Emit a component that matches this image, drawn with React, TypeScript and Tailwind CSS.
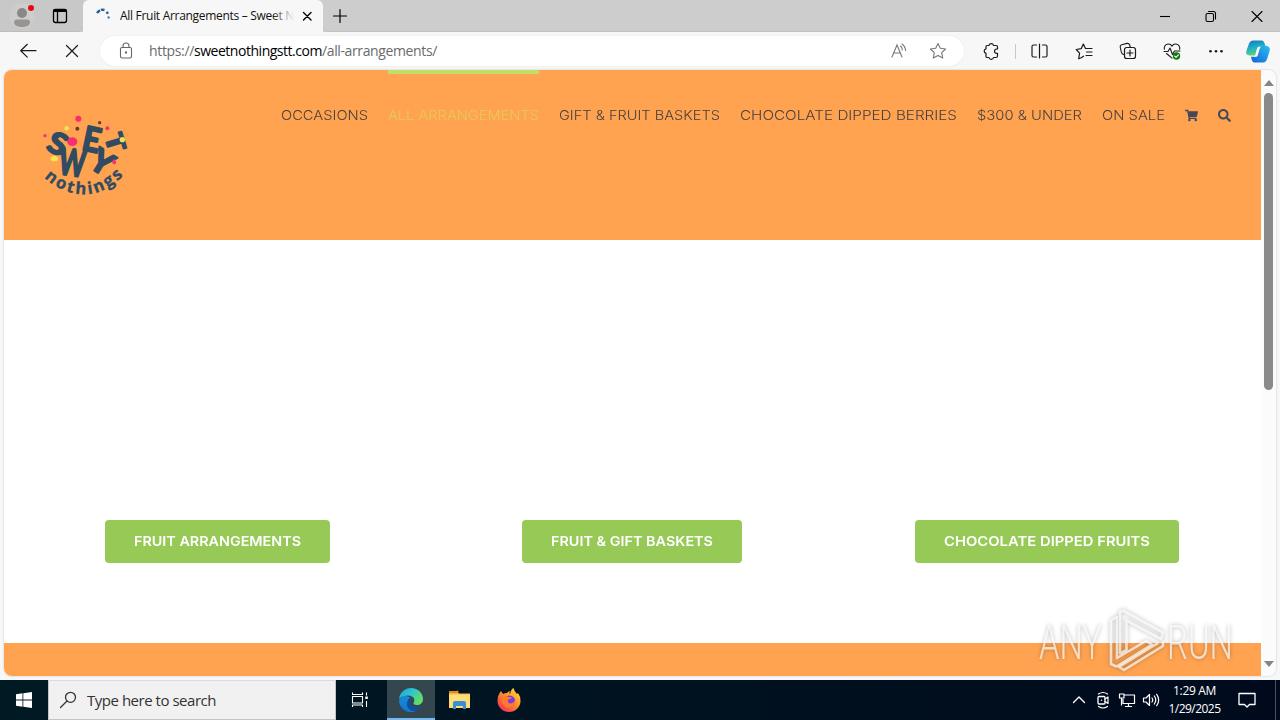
import React, { useLayoutEffect, useRef } from "react";
import { FaSearch, FaShoppingCart } from "react-icons/fa";

// makes the text fill the width of its box, by tracking or by wider letters
const FitText: React.FC<{
  className: string;
  children: string;
  wide?: boolean;
}> = ({ className, children, wide }) => {
  const box = useRef<HTMLSpanElement>(null);
  const text = useRef<HTMLSpanElement>(null);
  useLayoutEffect(() => {
    if (!box.current || !text.current) return;
    text.current.style.letterSpacing = "0px";
    text.current.style.transform = "none";
    const boxWidth = box.current.getBoundingClientRect().width;
    const textWidth = text.current.getBoundingClientRect().width;
    if (wide) {
      text.current.style.transform = `scaleX(${boxWidth / textWidth})`;
    } else {
      text.current.style.letterSpacing = `${(boxWidth - textWidth) / children.length}px`;
    }
  }, [children, wide]);
  return (
    <span ref={box} className={`block shrink-0 whitespace-nowrap ${className}`}>
      <span ref={text} className="inline-block origin-left">
        {children}
      </span>
    </span>
  );
};

const Icon: React.FC<{ className?: string; children: React.ReactNode }> = ({
  className = "size-5",
  children,
}) => (
  <svg
    viewBox="0 0 20 20"
    className={`shrink-0 ${className}`}
    fill="none"
    stroke="currentColor"
    strokeWidth="1.1"
    strokeLinecap="round"
    strokeLinejoin="round"
  >
    {children}
  </svg>
);

const TabStrip = () => (
  <div className="flex h-8 bg-[#cdcdcd]">
    <div className="flex w-[83px] items-center rounded-br-md bg-[#c8c8c8] shadow-[inset_0_-1px_0_#bdbdbd]">
      <svg viewBox="0 0 28 28" className="ml-2 size-7">
        <circle cx="14" cy="14" r="12.5" fill="#cfcdcb" />
        <circle cx="14" cy="11" r="5" fill="#8a8886" />
        <path d="M6 20.500q0-3 3-3h10q3 0 3 3c0 3-4 4.500-8 4.500S6 23.500 6 20.500z" fill="#979593" />
        <circle cx="23" cy="6" r="3" fill="#e50914" />
      </svg>
      <Icon className="ml-[14px] size-5">
        <rect x="3.500" y="3.500" width="13" height="13" rx="2" strokeWidth="1.300" />
        <path d="M4 5.200h12M4 4.500h12" strokeWidth="1.800" />
        <path d="M7.500 6v10" strokeWidth="1.300" />
      </Icon>
    </div>
    <div className="flex w-60 items-center rounded-t-md bg-[#f7f7f7]">
      <svg viewBox="0 0 20 20" className="ml-[10px] size-5" fill="none">
        <path d="M4 7Q7 2.800 11.500 4" stroke="#2b6299" strokeWidth="2.400" strokeDasharray="4 1" />
        <circle cx="14.300" cy="6.800" r="1.400" fill="#2b6299" />
        <circle cx="15.600" cy="11.500" r="1.200" fill="#4f7fae" />
      </svg>
      <div className="relative ml-[7px] w-[174px] overflow-hidden text-[12px] text-[#111]">
        <FitText className="w-[174px]">All Fruit Arrangements – Sweet N</FitText>
        <div className="absolute inset-y-0 right-0 w-5 bg-linear-to-r from-[#f7f7f7]/10 to-[#f7f7f7]" />
      </div>
      <Icon className="ml-[3px] size-5">
        <path d="M6.500 6.500l7.500 7.500M14 6.500L6.500 14" strokeWidth="1.400" />
      </Icon>
    </div>
    <div className="flex flex-1 items-center rounded-bl-md shadow-[inset_0_-1px_0_#c2c2c2]">
      <Icon className="ml-[7px] size-5">
        <path d="M10 3.500v13M3.500 10h13" strokeWidth="1.200" />
      </Icon>
    </div>
    <div className="flex shadow-[inset_0_-1px_0_#c2c2c2]">
      <div className="flex w-[46px] items-center justify-center">
        <Icon>
          <path d="M5 10.500h10" strokeLinecap="butt" />
        </Icon>
      </div>
      <div className="flex w-[46px] items-center justify-center">
        <Icon>
          <rect x="5" y="7.500" width="7.500" height="8" rx="1.500" />
          <path d="M7.500 5.500h5q2 0 2 2v5.500" />
        </Icon>
      </div>
      <div className="flex w-[46px] items-center justify-center">
        <Icon>
          <path d="M5 5.500l10 10M15 5.500l-10 10" />
        </Icon>
      </div>
    </div>
  </div>
);

const Toolbar = () => (
  <div className="flex h-[38px] items-center bg-[#f7f7f7] text-[#1b1b1b]">
    <Icon className="ml-[18px] size-5">
      <path d="M18 9.700H3M9.300 3.300L2.700 9.700l6.600 6.400" strokeWidth="1.200" />
    </Icon>
    <Icon className="ml-6 size-5">
      <path d="M4.500 4.500l11 11M15.500 4.500l-11 11" strokeWidth="1.200" />
    </Icon>
    <div className="ml-[18px] flex h-[30px] w-[864px] items-center rounded-full bg-white shadow-[0_0_2px_#e4e4e4]">
      <Icon className="ml-4 size-5 text-[#666]">
        <rect x="4.500" y="6.500" width="11" height="10.500" rx="1.500" />
        <path d="M7 6.500V5a3 3 0 016 0v1.500" />
        <circle cx="10" cy="11.500" r=".6" fill="currentColor" />
      </Icon>
      <div className="ml-[13px] flex flex-1 text-[14px] leading-5 text-[#6b6b6b]">
        <FitText className="w-[45px]">https://</FitText>
        <FitText className="w-[128px] text-black">sweetnothingstt.com</FitText>
        <FitText className="w-[115px]">/all-arrangements/</FitText>
      </div>
      <svg viewBox="0 0 20 20" className="size-5 text-[#777]" fill="none" stroke="currentColor" strokeWidth="1.100" strokeLinecap="round">
        <path d="M4 16L9 4l5 12M5.700 12h6.600" />
        <path d="M12.500 5q1.800 1.500 1.800 4M14 3q3.500 2.500 3.500 6.500" />
      </svg>
      <Icon className="ml-5 mr-4 size-5 text-[#777]">
        <path d="M10 2.500l2.300 4.800 5.300.7-3.900 3.700 1 5.300-4.700-2.600L5.300 17l1-5.300L2.400 8l5.300-.7z" />
      </Icon>
    </div>
    <div className="ml-[5px] flex w-11 justify-center">
      <Icon>
        <path d="M6 4.500h2a2.300 2.300 0 014.500 0h2.500q1.500 0 1.500 1.500v2h-.8a2.100 2.100 0 000 4.300h.8V15q0 1.500-1.500 1.500h-2.500a2.300 2.300 0 01-4.500 0H6q-1 0-1-1V12.300a2.300 2.300 0 010-4.500V5.500q0-1 1-1z" strokeWidth="1.200" />
      </Icon>
    </div>
    <div className="flex w-1 justify-center">
      <div className="h-[15px] w-px bg-[#c8c8c8]" />
    </div>
    <div className="flex w-11 justify-center">
      <Icon>
        <path d="M7.500 4H4.500q-1.500 0-1.500 1.500v9Q3 16 4.500 16h3M13.500 4h3Q18 4 18 5.500v9q0 1.500-1.500 1.500h-3M10.500 3v14" strokeWidth="1.200" />
      </Icon>
    </div>
    <div className="flex w-[45px] justify-center">
      <Icon>
        <path d="M7.200 16.700l-2.500 1 .9-5.500L2.200 8.500l5-.8L9.300 3l2.200 4.500h6.500M12.500 11h5.500M12 14.500h6M7.200 16.700l2.300-1.500" strokeWidth="1.200" />
      </Icon>
    </div>
    <div className="flex w-11 justify-center">
      <Icon>
        <path d="M5.500 13.500Q3.700 13 3.300 11L2.200 6q-.3-1.800 1.500-2.300L9 2.400q2-.3 2.700 1.600L12.200 6" />
        <rect x="6.500" y="6.500" width="11" height="11" rx="2.300" strokeWidth="1.200" />
        <path d="M12 9v6M9 12h6" strokeWidth="1.200" />
      </Icon>
    </div>
    <div className="flex w-11 justify-center">
      <Icon>
        <path d="M2.300 8.300C1.800 2.500 8 1.700 10 5.200c2-3.500 8.200-2.700 7.700 3.100M2 10.500h4L8 7l2.500 6.500 2-3.500h5.500M4.500 12.500L10 17.200" />
        <circle cx="14.500" cy="15" r="3.700" fill="#107c10" stroke="none" />
        <path d="M12.700 15.200l1.300 1.200 2.400-2.500" stroke="#fff" />
      </Icon>
    </div>
    <div className="flex w-11 justify-center">
      <svg viewBox="0 0 20 20" className="size-5" fill="currentColor">
        <circle cx="4.500" cy="10.300" r="1.300" />
        <circle cx="10" cy="10.300" r="1.300" />
        <circle cx="15.500" cy="10.300" r="1.300" />
      </svg>
    </div>
    <div className="flex w-10 justify-center">
      <svg viewBox="0 0 72 68" className="h-[23px] w-6">
        <defs>
          <linearGradient id="cpA" x1="0" y1="0" x2=".3" y2="1">
            <stop offset="0" stopColor="#1572c9" />
            <stop offset=".55" stopColor="#1fb1c4" />
            <stop offset="1" stopColor="#5fd276" />
          </linearGradient>
          <linearGradient id="cpB" x1="1" y1="0" x2="0" y2="1">
            <stop offset="0" stopColor="#2bc0ee" />
            <stop offset="1" stopColor="#1460dc" />
          </linearGradient>
        </defs>
        <path d="M22 1h26q6 1 8 9l2 8H46q-5 0-7 6l-6 17q-2 5-7 5H10Q-2 45 1 33L9 10Q13 1 22 1z" fill="url(#cpA)" />
        <path d="M50 67H25q-6-1-8-9l-2-8h10q6 0 8-6l7-21q2-6 8-6h12q14 2 11 15L63 57q-4 10-13 10z" fill="url(#cpB)" />
        <path d="M37 20h9q-4 2-5 6l-6 20q-1 4-5 4h-7q4-2 5-6l5-18q1-5 4-6z" fill="#fff" />
      </svg>
    </div>
  </div>
);

const SweetLogo = () => (
  <svg viewBox="0 0 330 300" className="h-[100px] w-[110px] shrink-0">
    <defs>
      <path id="arc" d="M42 218Q95 266 160 268T290 202" />
    </defs>
    <g
      fill="#304b62"
      stroke="#304b62"
      strokeWidth="6"
      strokeLinejoin="round"
      fontFamily="Lato, sans-serif"
      fontWeight="700"
      textAnchor="middle"
    >
      <text transform="translate(71 145) rotate(24) scale(1.15 1)" fontSize="88">S</text>
      <text transform="translate(121 212) rotate(8) scale(.68 1)" fontSize="112">W</text>
      <text transform="translate(178 139) rotate(12) scale(.9 1)" fontSize="102">E</text>
      <text transform="translate(198 200) rotate(32)" fontSize="96">Y</text>
      <text transform="translate(231 119) rotate(73) scale(1.2 1)" fontSize="72">T</text>
    </g>
    <text
      fill="#304b62"
      stroke="#304b62"
      strokeWidth="1"
      fontFamily="'Open Sans', sans-serif"
      fontWeight="700"
      fontSize="50"
    >
      <textPath href="#arc" textLength="267">nothings</textPath>
    </text>
    <circle cx="145" cy="41" r="9" fill="#f72f72" />
    <ellipse cx="127" cy="110" rx="15" ry="13" fill="#f72f72" />
    <circle cx="45" cy="92" r="5" fill="#f72f72" />
    <circle cx="232" cy="70" r="6" fill="#f72f72" />
    <path d="M251 162q10 6 6 14-6 4-10-2 0-8 4-12z" fill="#f72f72" />
    <circle cx="110" cy="70" r="7" fill="#f2df58" />
    <ellipse cx="73" cy="161" rx="11" ry="8" fill="#f2e64c" />
    <circle cx="277" cy="104" r="8" fill="#f2df58" />
    <circle cx="142" cy="71" r="6" fill="#71372e" />
    <circle cx="209" cy="53" r="5" fill="#71372e" />
  </svg>
);

const SiteHeader = () => (
  <header className="flex h-[170px] items-start bg-[#ffa351] pl-[26px] font-[Inter,sans-serif] text-[13.500px] text-[#463f3f]">
    <div className="pt-[35px]">
      <SweetLogo />
    </div>
    <nav className="ml-[141px] flex gap-5 pt-9 font-light leading-[18px]">
      <FitText wide className="w-[87px]">OCCASIONS</FitText>
      <div className="-mt-9 border-t-4 border-[#c3de66] pt-8 text-[#e5cb57]">
        <FitText wide className="w-[151px]">ALL ARRANGEMENTS</FitText>
      </div>
      <FitText wide className="w-[161px]">GIFT &amp; FRUIT BASKETS</FitText>
      <FitText wide className="w-[217px]">CHOCOLATE DIPPED BERRIES</FitText>
      <FitText wide className="w-[105px]">$300 &amp; UNDER</FitText>
      <FitText wide className="w-[63px]">ON SALE</FitText>
      <FaShoppingCart className="mt-[3px] h-[13px] w-[13px] text-[#46485a]" />
      <FaSearch className="mt-[3px] h-[13px] w-[13px] text-[#46485a]" />
    </nav>
  </header>
);

const ScrollBar = () => (
  <div className="flex w-[15px] flex-col items-center bg-[#fbfbfb]">
    <svg viewBox="0 0 10 6" className="mt-[10px] h-[6px] w-[10px]">
      <path d="M5 0l5 6H0z" fill="#858585" />
    </svg>
    <div className="mt-[7px] h-[297px] w-[9px] rounded-full bg-[#8a8a8a]" />
    <div className="flex-1" />
    <svg viewBox="0 0 10 6" className="mb-[9px] h-[6px] w-[10px]">
      <path d="M5 6l5-6H0z" fill="#858585" />
    </svg>
  </div>
);

const buttonClass =
  "flex h-[43px] items-center justify-center rounded-[4px] bg-[#97c956] font-[Inter,sans-serif] text-[13.500px] font-semibold text-white";

const WebPage = () => (
  <div className="flex h-[610px] bg-[#f7f7f7] pb-1 pl-1 pr-1">
    <div className="flex flex-1 overflow-hidden rounded-lg bg-white shadow-[0_0_2px_#bbb]">
      <main className="flex w-[1257px] flex-col">
        <SiteHeader />
        <section className="flex h-[403px] items-start pl-[101px] pt-[280px]">
          <div className={`w-[225px] ${buttonClass}`}>
            <FitText wide className="w-[167px]">FRUIT ARRANGEMENTS</FitText>
          </div>
          <div className={`ml-48 w-[220px] ${buttonClass}`}>
            <FitText wide className="w-[162px]">FRUIT &amp; GIFT BASKETS</FitText>
          </div>
          <div className={`ml-[173px] w-[264px] ${buttonClass}`}>
            <FitText wide className="w-[206px]">CHOCOLATE DIPPED FRUITS</FitText>
          </div>
        </section>
        <footer className="flex-1 bg-[#ffa351]" />
      </main>
      <ScrollBar />
    </div>
  </div>
);

const Watermark = () => (
  <svg viewBox="0 0 210 80" className="absolute left-[1036px] top-[605px] h-[80px] w-[210px] overflow-visible drop-shadow-[0_0_2px_rgba(0,0,0,0.4)]">
    <g fill="#fff" fillOpacity=".7" fontFamily="Roboto, sans-serif" fontWeight="300" fontSize="49">
      <text x="3" y="54" textLength="63" lengthAdjust="spacingAndGlyphs">ANY</text>
      <text x="131" y="54" textLength="66" lengthAdjust="spacingAndGlyphs">RUN</text>
    </g>
    <g fill="none" stroke="#fff" strokeOpacity=".7" strokeWidth="2.600" strokeLinejoin="round">
      <path d="M87 5.500L127 27.500 125 34 90.500 15.500V45L84 48.500V7z" />
      <path d="M127 35.500V41L88 65 83 62 122 38" />
      <path d="M81 12L75 15.500V59l5.500 2.500L116 39.500 110 36 81 53z" />
    </g>
  </svg>
);

const Taskbar = () => (
  <div className="flex h-10 items-center bg-linear-to-r from-[#001a24] to-[#000a1c] text-white">
    <div className="flex w-12 justify-center">
      <svg viewBox="0 0 16 16" className="size-4" fill="#fff">
        <path d="M0 2.200L6.500 1.300v6.300H0zM7.300 1.200L16 0v7.600H7.300zM0 8.400h6.500v6.300L0 13.800zM7.300 8.400H16V16l-8.700-1.200z" />
      </svg>
    </div>
    <div className="flex h-10 w-72 items-center border border-t-[#d9dde3] border-[#c4c4c4] bg-[#f1f1f1] text-[#333]">
      <Icon className="ml-[10px] size-5">
        <circle cx="11.500" cy="7.300" r="5" strokeWidth="1.300" />
        <path d="M8 11l-6.500 6.500" strokeWidth="1.300" />
      </Icon>
      <FitText className="ml-2 w-[129px] text-[15px]">Type here to search</FitText>
    </div>
    <div className="flex w-[51px] justify-center">
      <Icon className="size-5 -ml-[3px]">
        <path d="M2.500 2.500v2h10v-2M2.500 17v-2h10v2M2.500 6.500h10v6.500h-10zM16.500 2.500v3M16.500 11v6" strokeLinecap="butt" />
        <rect x="15.300" y="6.500" width="2.500" height="2.500" fill="#fff" stroke="none" />
      </Icon>
    </div>
    <div className="flex h-10 w-12 items-center justify-center border-b-2 border-[#76b9ed] bg-[#34474e]">
      <svg viewBox="0 0 24 24" className="mt-[1px] size-6">
        <defs>
          <linearGradient id="edgeTop" x1="0" y1="0" x2="1" y2=".6">
            <stop offset="0" stopColor="#1e9de0" />
            <stop offset=".5" stopColor="#30c5cf" />
            <stop offset="1" stopColor="#66de61" />
          </linearGradient>
          <linearGradient id="edgeSide" x1="0" y1="0" x2="0" y2="1">
            <stop offset="0" stopColor="#178bdc" />
            <stop offset="1" stopColor="#1277d0" />
          </linearGradient>
        </defs>
        <path d="M0 12a12 12 0 0017 11c-5 0-9-3-9-7 0-3 1.500-5 4-6Q5 5 0 12z" fill="url(#edgeSide)" />
        <path d="M9 12q-3 9 5 11 5 0 8.500-5.500Q18 20 14 18c-4-2-3-5-1.500-7.500Q10 9 9 12z" fill="#104f9c" />
        <path d="M0 11C1 4 6 0 12 0c7 0 12 5 12 11 0 4-3 6-6 6-2.500 0-4-1-3.500-2 2-3 .5-7-5-7.500Q3 7.500 0 11z" fill="url(#edgeTop)" />
      </svg>
    </div>
    <div className="flex w-12 justify-center">
      <svg viewBox="0 0 24 20" className="ml-px h-5 w-6">
        <path d="M1 1h8l2 2.500h11V18H1z" fill="#f5b83d" />
        <path d="M1 4.500h21V18H1z" fill="#ffdc78" />
        <path d="M1 2h8l1-1" stroke="#e08b1b" strokeWidth="2" fill="none" />
        <path d="M5 19v-6q0-2 2-2h9q2 0 2 2v6h-3v-3H8v3z" fill="#3b8fd0" />
      </svg>
    </div>
    <div className="flex w-[50px] justify-center">
      <svg viewBox="0 0 24 24" className="ml-px size-6">
        <defs>
          <linearGradient id="fox" x1="1" y1="0" x2=".2" y2="1">
            <stop offset="0" stopColor="#ffea45" />
            <stop offset=".45" stopColor="#ff9a27" />
            <stop offset="1" stopColor="#f22d55" />
          </linearGradient>
        </defs>
        <path d="M4 3l2 3q2-1 4-1 1-1.500 3-2-1 2 0 3 1-5 3.500-6Q17 3 20 6l1-1q2.500 3 2.500 8A11.500 11 0 01.500 13Q.500 7 4 3z" fill="url(#fox)" />
        <circle cx="12.500" cy="13" r="5.600" fill="#7a3ce0" />
        <path d="M5 10q3-3 7-1l3 .5q-1 2-4 2-1 3 2 4 3 0 5-3 0 6-6 7Q4 19 5 10z" fill="#ff7a2b" />
      </svg>
    </div>
    <div className="flex-1" />
    <Icon className="size-5">
      <path d="M4.500 12.500L10 7l5.500 5.500" strokeWidth="1.400" />
    </Icon>
    <Icon className="ml-1 size-5">
      <rect x="5" y="6.500" width="7" height="7.500" rx="1" strokeWidth="1.300" />
      <path d="M12 9l3-2v6.500l-3-2M5.500 4Q10 1 14.500 4M5.500 16.500q4.500 3 9 0" strokeWidth="1.200" />
      <circle cx="8.500" cy="10.200" r=".7" fill="currentColor" stroke="none" />
    </Icon>
    <Icon className="ml-1 size-5">
      <path d="M7 5h10.500v8.500H6V9M11.500 13.500v3M8 16.500h7M2.500 4h4.500v4H2.500zM4.500 8v7.500" strokeWidth="1.200" strokeLinecap="butt" />
    </Icon>
    <Icon className="ml-1 size-5">
      <path d="M2.500 8h2.500l3.500-3.500v11L5 12H2.500zM11 8q1.500 2 0 4M13.300 6q3 4 0 8M15.700 4.300q4 5.700 0 11.400" strokeWidth="1.200" />
    </Icon>
    <div className="ml-[7px] flex w-[53px] flex-col items-center text-[12px] leading-[18px]">
      <FitText className="w-[43px]">1:29 AM</FitText>
      <FitText className="w-[52px]">1/29/2025</FitText>
    </div>
    <Icon className="ml-4 size-5">
      <path d="M2 3.500h16v11h-5.500L10 17l-2.500-2.500H2z" strokeWidth="1.300" />
    </Icon>
    <div className="ml-[18px] mr-1 h-10 w-px bg-[#4a5260]" />
  </div>
);

const App: React.FC = () => {
  return (
    <div className="relative flex h-[720px] w-[1280px] flex-col overflow-hidden font-['Open_Sans',sans-serif]">
      <TabStrip />
      <Toolbar />
      <WebPage />
      <Taskbar />
      <Watermark />
    </div>
  );
};

export default App;
